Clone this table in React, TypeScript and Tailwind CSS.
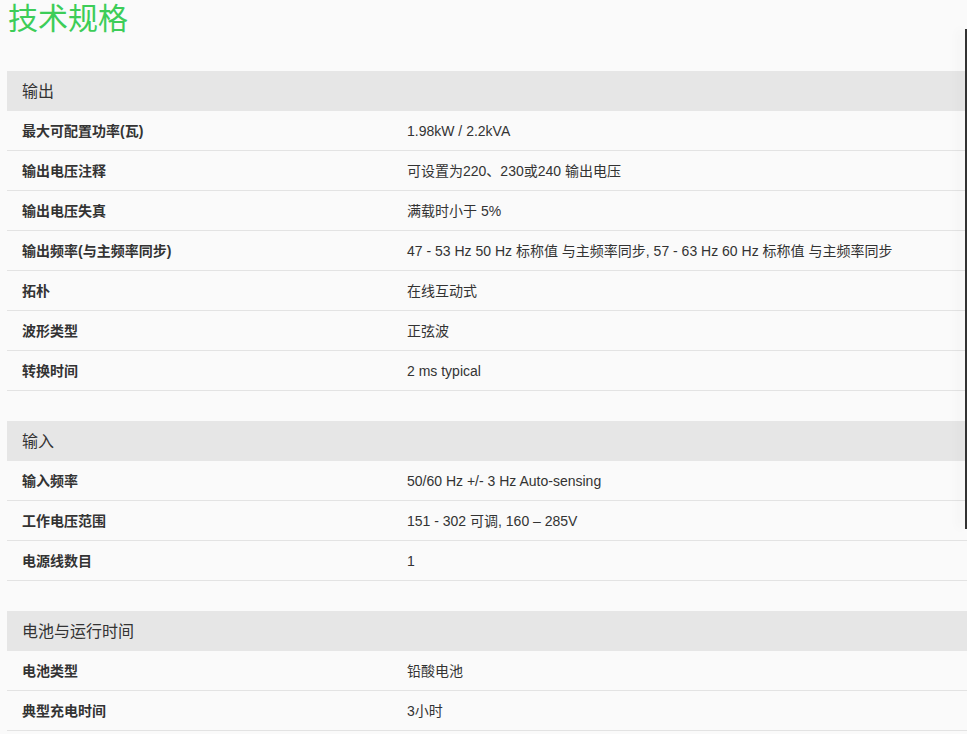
import React from "react";

type Section = { title: string; rows: [string, string][] };

const sections: Section[] = [
  {
    title: "输出",
    rows: [
      ["最大可配置功率(瓦)", "1.98kW / 2.2kVA"],
      ["输出电压注释", "可设置为220、230或240 输出电压"],
      ["输出电压失真", "满载时小于 5%"],
      [
        "输出频率(与主频率同步)",
        "47 - 53 Hz 50 Hz 标称值 与主频率同步, 57 - 63 Hz 60 Hz 标称值 与主频率同步",
      ],
      ["拓朴", "在线互动式"],
      ["波形类型", "正弦波"],
      ["转换时间", "2 ms typical"],
    ],
  },
  {
    title: "输入",
    rows: [
      ["输入频率", "50/60 Hz +/- 3 Hz Auto-sensing"],
      ["工作电压范围", "151 - 302 可调, 160 – 285V"],
      ["电源线数目", "1"],
    ],
  },
  {
    title: "电池与运行时间",
    rows: [
      ["电池类型", "铅酸电池"],
      ["典型充电时间", "3小时"],
    ],
  },
];

export default function App() {
  return (
    <div
      className="relative min-h-[734px] overflow-hidden bg-[#fafafa] text-[#333]"
      style={{ fontFamily: '"Liberation Sans", Arial, "Noto Sans CJK SC", sans-serif' }}
    >
      <h1 className="pl-[8px] text-[30px] leading-[38px] font-normal text-[#3dcd58]">技术规格</h1>
      <div className="mt-[33px] ml-[7px] flex flex-col gap-[30px]">
        {sections.map((s) => (
          <div key={s.title}>
            <div className="flex h-[40px] items-center bg-[#e6e6e6] pl-[15px] pt-[1px] text-[16px] text-[#333]">
              {s.title}
            </div>
            {s.rows.map(([k, v]) => (
              <div
                key={k}
                className="flex h-[40px] items-center border-b border-[#e3e3e3] pt-[2px] text-[14px]"
              >
                <div className="w-[400px] shrink-0 pl-[15px] font-bold text-[#333]">{k}</div>
                <div className="text-[#333]">{v}</div>
              </div>
            ))}
          </div>
        ))}
      </div>
      <div className="absolute right-0 top-[29px] h-[500px] w-[2px] bg-[#333] shadow-[-6px_0_10px_rgba(0,0,0,0.08)]" />
    </div>
  );
}
